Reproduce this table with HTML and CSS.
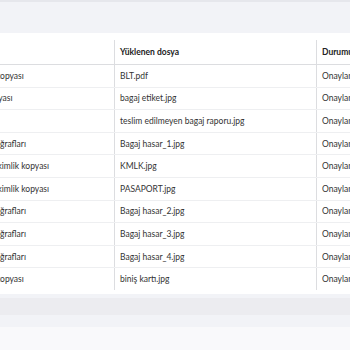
FILE: index.html
```html
<!DOCTYPE html>
<html>
<head>
  <meta charset="utf-8">
  <meta name="viewport" content="width=device-width">
  <title>Belgeler</title>
  <link rel="stylesheet" href="styles.css">
</head>
<body>
    <div class="topline"></div>
    <div class="page">
        <div class="card">
            <div class="table_wrap">
                <table class="doc_table">
                    <thead>
                        <tr>
                            <th class="col_type">Belge</th>
                            <th class="col_file">Yüklenen dosya</th>
                            <th class="col_state">Durumu</th>
                        </tr>
                    </thead>
                    <tbody>
                        <tr><td class="col_type">Pasaport kopyası</td><td class="col_file">BLT.pdf</td><td class="col_state">Onaylandı</td></tr>
                        <tr><td class="col_type">Etiket kopyası</td><td class="col_file">bagaj etiket.jpg</td><td class="col_state">Onaylandı</td></tr>
                        <tr><td class="col_type"></td><td class="col_file">teslim edilmeyen bagaj raporu.jpg</td><td class="col_state">Onaylandı</td></tr>
                        <tr><td class="col_type">Hasar fotoğrafları</td><td class="col_file">Bagaj hasar_1.jpg</td><td class="col_state">Onaylandı</td></tr>
                        <tr><td class="col_type">Yolcunun kimlik kopyası</td><td class="col_file">KMLK.jpg</td><td class="col_state">Onaylandı</td></tr>
                        <tr><td class="col_type">Yolcunun kimlik kopyası</td><td class="col_file">PASAPORT.jpg</td><td class="col_state">Onaylandı</td></tr>
                        <tr><td class="col_type">Hasar fotoğrafları</td><td class="col_file">Bagaj hasar_2.jpg</td><td class="col_state">Onaylandı</td></tr>
                        <tr><td class="col_type">Hasar fotoğrafları</td><td class="col_file">Bagaj hasar_3.jpg</td><td class="col_state">Onaylandı</td></tr>
                        <tr><td class="col_type">Hasar fotoğrafları</td><td class="col_file">Bagaj hasar_4.jpg</td><td class="col_state">Onaylandı</td></tr>
                        <tr><td class="col_type">Pasaport kopyası</td><td class="col_file">biniş kartı.jpg</td><td class="col_state">Onaylandı</td></tr>
                    </tbody>
                </table>
            </div>
        </div>
        <div class="scroll_track"></div>
        <div class="gap"></div>
        <div class="card next_card"></div>
    </div>
</body>
</html>
```

FILE: styles.css
```css
body{
    margin: 0;
    background-color: #f2f3f7;
    font-family: Lato, "Liberation Sans", sans-serif;
    color: #333;
}

.topline{
    height: 2px;
    background-color: #e6e7ec;
}

.page{
    padding-top: 31px;
}

.card{
    background-color: #fff;
    padding-top: 7px;
    padding-bottom: 4px;
}

.table_wrap{
    overflow: hidden;
}

.doc_table{
    border-collapse: collapse;
    table-layout: fixed;
    width: 520px;
    margin-left: -44px;
    font-size: 8.5px;
}

.doc_table th{
    text-align: left;
    font-weight: 700;
    color: #222;
    height: 24px;
    padding: 0 5px;
    border-bottom: 1px solid #dcdde0;
}

.doc_table td{
    height: 21.6px;
    padding: 0 5px;
    border-bottom: 1px solid #eeeff1;
    white-space: nowrap;
    overflow: hidden;
}

.doc_table .col_type{
    width: 148px;
}

.doc_table .col_file{
    width: 191px;
    border-left: 1px solid #dcdde0;
}

.doc_table .col_state{
    border-left: 1px solid #dcdde0;
}

.doc_table tbody tr:last-child td{
    border-bottom: none;
}

.scroll_track{
    height: 17px;
    background-color: #ececf0;
    margin-top: 4px;
}

.gap{
    height: 12px;
}

.next_card{
    height: 30px;
    background-color: #f9f9fb;
    padding: 0;
}
```
